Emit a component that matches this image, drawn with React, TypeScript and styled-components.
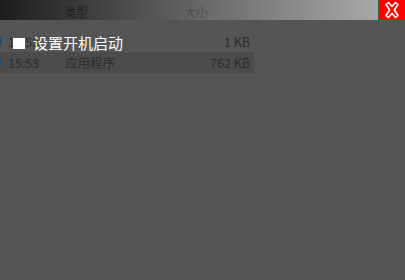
import React from "react";
import styled, { createGlobalStyle } from "styled-components";

const Global = createGlobalStyle`
  html, body {
    margin: 0;
    padding: 0;
    background: #555555;
  }
  body {
    font-family: "Noto Sans CJK SC", "Noto Sans", sans-serif;
  }
`;

const Page = styled.div`
  position: relative;
  width: 405px;
  height: 280px;
  overflow: hidden;
  background: #555555;
`;

const TopBar = styled.div`
  display: flex;
  height: 20px;
`;

const HeaderCells = styled.div`
  flex: 1;
  display: grid;
  grid-template-columns: 57px 120px 80px 1fr;
  background: linear-gradient(to right, #1d1d1d 0%, #a9a9a9 100%);
`;

const HeaderCell = styled.div<{ $tone: string }>`
  padding: 5px 0 0 7px;
  font-size: 12px;
  line-height: 14px;
  color: ${(p) => p.$tone};
  overflow: hidden;
`;

const CloseBtn = styled.div`
  width: 26px;
  height: 20px;
  margin-left: 1px;
  background: #ff0000;
  display: flex;
  align-items: center;
  justify-content: center;
`;

const DividerStrip = styled.div`
  display: grid;
  grid-template-columns: 57px 120px 80px 1fr;
  height: 4px;
`;

const Divider = styled.div`
  border-left: 1px solid #474747;
  &:first-child {
    border-left: none;
  }
`;

const Table = styled.div`
  padding-top: 7px;
  width: 254px;
`;

const Row = styled.div<{ $selected?: boolean }>`
  position: relative;
  display: grid;
  grid-template-columns: 57px 120px 77px;
  height: 21px;
  align-items: center;
  font-size: 12.5px;
  color: #2e2e2e;
  background: ${(p) => (p.$selected ? "#4b4b4b" : "transparent")};
`;

const Mark = styled.span`
  position: absolute;
  left: 0;
  top: 6px;
  width: 2px;
  height: 8px;
  background: #2b4a66;
`;

const Cell = styled.div<{ $right?: boolean }>`
  padding: ${(p) => (p.$right ? "0 4px 0 0" : "0 0 0 8px")};
  text-align: ${(p) => (p.$right ? "right" : "left")};
  white-space: nowrap;
  overflow: hidden;
`;

const Overlay = styled.label`
  position: absolute;
  left: 13px;
  top: 34px;
  display: flex;
  align-items: center;
  gap: 8px;
  font-size: 15px;
  line-height: 18px;
  color: #ffffff;
`;

const Box = styled.span`
  width: 12px;
  height: 11px;
  background: #ffffff;
`;

const rows = [
  { time: "15:53", type: "", size: "1 KB" },
  { time: "15:53", type: "应用程序", size: "762 KB", selected: true },
];

export default function App() {
  return (
    <Page>
      <Global />
      <TopBar>
        <HeaderCells>
          <HeaderCell $tone="#1b1b1b" />
          <HeaderCell $tone="#232323">类型</HeaderCell>
          <HeaderCell $tone="#4f4f4f">大小</HeaderCell>
          <HeaderCell $tone="#777" />
        </HeaderCells>
        <CloseBtn>
          <svg width="20" height="18" viewBox="0 0 20 18">
            <path
              d="M4 3.5 L6.5 1.5 L10 5.5 L13.5 1.5 L16 3.5 L12.3 9 L16 14.5 L13.5 16.5 L10 12.5 L6.5 16.5 L4 14.5 L7.7 9 Z"
              fill="#ff0000"
              stroke="#ffffff"
              strokeWidth="1.6"
              strokeLinejoin="round"
            />
          </svg>
        </CloseBtn>
      </TopBar>
      <DividerStrip>
        <Divider />
        <Divider />
        <Divider />
        <Divider />
      </DividerStrip>
      <Table>
        {rows.map((r, i) => (
          <Row key={i} $selected={r.selected}>
            <Mark />
            <Cell>{r.time}</Cell>
            <Cell>{r.type}</Cell>
            <Cell $right>{r.size}</Cell>
          </Row>
        ))}
      </Table>
      <Overlay>
        <Box />
        设置开机启动
      </Overlay>
    </Page>
  );
}
